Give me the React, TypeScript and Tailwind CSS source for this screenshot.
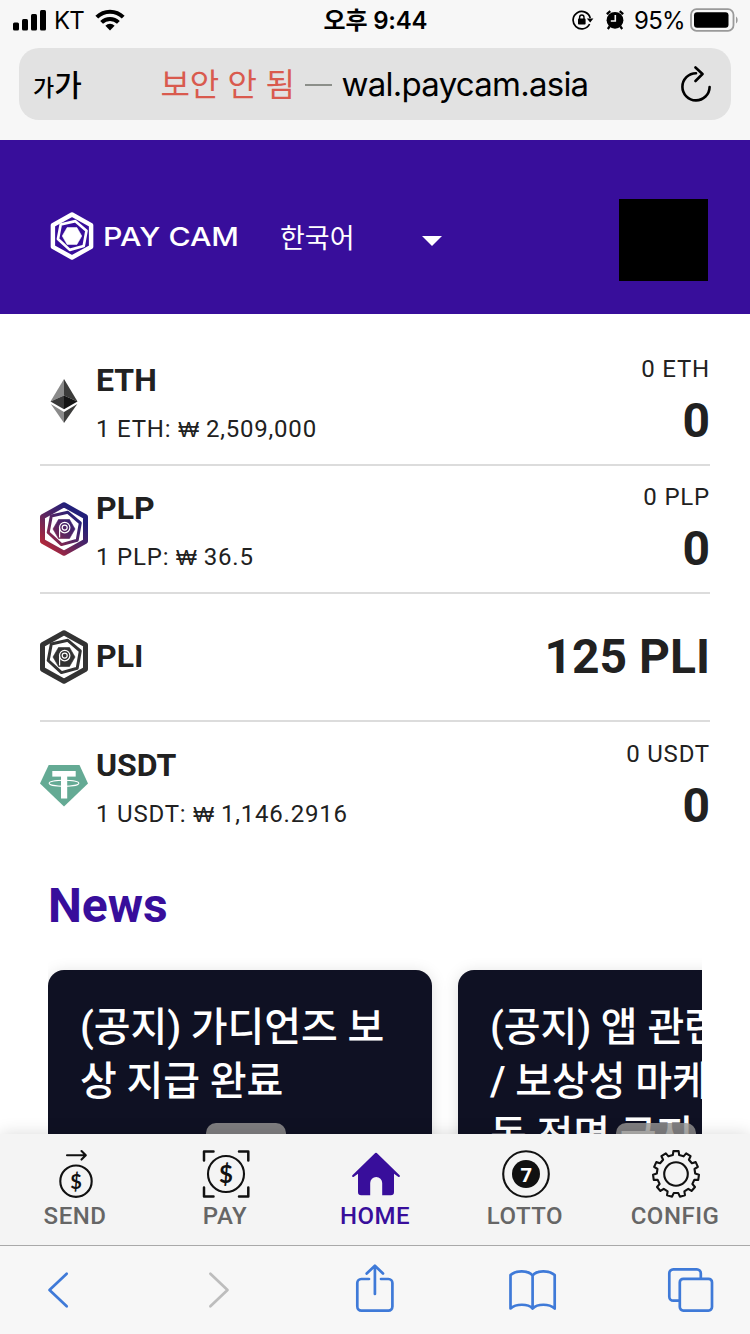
import type { ReactNode } from 'react'

const MIDDLE_HEX = '27.8,10.3 40.3,21 37.2,38.2 21.500,42.600 8.2,30.500 11.3,14'
const INNER_HEX = '18.5,17.5 29.5,17.5 35,27 29.5,36.5 18.5,36.5 13,27'

function HexLogo({ color, hole, className }: { color: string; hole?: string; className: string }) {
  return (
    <svg viewBox="0 0 48 54" className={className} fill="none" stroke={color} strokeLinejoin="round">
      <defs>
        <linearGradient id="plp" gradientUnits="userSpaceOnUse" x1="6" y1="46" x2="38" y2="14">
          <stop offset="0" stopColor="#b3283a" />
          <stop offset="0.5" stopColor="#5c2560" />
          <stop offset="1" stopColor="#22207a" />
        </linearGradient>
      </defs>
      <polygon points="24,2.8 45.5,14.8 45.5,39.2 24,51.2 2.5,39.2 2.5,14.8" strokeWidth="5" />
      <polygon points={MIDDLE_HEX} strokeWidth="3" />
      <polygon points={INNER_HEX} fill={color} strokeWidth="0.6" />
      {hole && (
        <g stroke={hole} strokeWidth="1.2">
          <circle cx="24.7" cy="25.6" r="5.2" />
          <circle cx="24.7" cy="25.6" r="2.5" />
          <line x1="19.6" y1="25.6" x2="19.6" y2="35.5" />
        </g>
      )}
    </svg>
  )
}

function EthLogo() {
  return (
    <svg viewBox="0 0 48 54" className="h-[54px] w-12">
      <polygon points="24,5 10.5,27.5 24,21.5" fill="#8a8a8a" />
      <polygon points="24,5 37.5,27.5 24,21.5" fill="#3c3c3b" />
      <polygon points="10.5,27.5 24,21.5 24,35.3" fill="#393939" />
      <polygon points="37.5,27.5 24,21.5 24,35.3" fill="#141414" />
      <polygon points="10.8,30 24,38 24,49" fill="#8a8a8a" />
      <polygon points="37.3,30 24,38 24,49" fill="#3c3c3b" />
    </svg>
  )
}

function UsdtLogo() {
  return (
    <svg viewBox="0 0 48 54" className="h-[54px] w-12">
      <polygon points="8.7,6 39.5,6 48,24.6 24,47.5 0,24.6" fill="#64aa94" />
      <rect x="12.3" y="12" width="23.4" height="5.6" fill="#fff" />
      <rect x="21" y="12" width="6.2" height="27.5" fill="#fff" />
      <ellipse cx="24" cy="24.2" rx="14.8" ry="3" fill="none" stroke="#fff" strokeWidth="1.1" />
    </svg>
  )
}

const coins = [
  { name: 'ETH', price: '2,509,000', amount: '0 ETH', value: '0', icon: <EthLogo /> },
  { name: 'PLP', price: '36.5', amount: '0 PLP', value: '0', icon: <HexLogo color="url(#plp)" hole="#fff" className="h-[54px] w-12" /> },
  { name: 'PLI', value: '125 PLI', icon: <HexLogo color="#333333" hole="#fff" className="h-[54px] w-12" /> },
  { name: 'USDT', price: '1,146.2916', amount: '0 USDT', value: '0', icon: <UsdtLogo /> },
]

const news = ['(공지) 가디언즈 보상 지급 완료', '(공지) 앱 관련\n/ 보상성 마케팅 활동 전면 금지']

function gearPoints(teeth: number, outer: number, inner: number) {
  const step = (Math.PI * 2) / teeth
  const pts: string[] = []
  for (let i = 0; i < teeth; i++) {
    const corners = [[-0.29, inner], [-0.2, outer], [0.2, outer], [0.29, inner]]
    corners.forEach(([t, r]) => {
      const a = (i + t) * step
      pts.push(`${(25 + r * Math.sin(a)).toFixed(2)},${(24 - r * Math.cos(a)).toFixed(2)}`)
    })
  }
  return pts.join(' ')
}

function NavIcon({ children }: { children: ReactNode }) {
  return (
    <svg viewBox="0 0 48 48" className="h-12 w-12 overflow-visible" fill="none" stroke="#111" strokeWidth="2.1" strokeLinecap="round" strokeLinejoin="round">
      {children}
    </svg>
  )
}

const tabs = [
  {
    label: 'SEND',
    icon: (
      <NavIcon>
        <path d="M16 5.3H34.5M30.5 1l4.3 4.3-4.3 4.3" />
        <circle cx="25" cy="31.2" r="15.7" />
        <text x="25" y="38.5" textAnchor="middle" fill="#111" stroke="none" className="font-['Lato'] text-[20px] font-bold">$</text>
      </NavIcon>
    ),
  },
  {
    label: 'PAY',
    icon: (
      <NavIcon>
        <path d="M3 10.5V1.5H12.5M38 1.5h9.3v9M3 37.5v9h9.5M38 46.5h9.3v-9" strokeWidth="2.5" />
        <circle cx="25" cy="24" r="18" />
        <text x="25" y="32.5" textAnchor="middle" fill="#111" stroke="none" className="font-['Lato'] text-[24px] font-bold">$</text>
      </NavIcon>
    ),
  },
  {
    label: 'HOME',
    active: true,
    icon: (
      <NavIcon>
        <path
          d="M24.2 3a1.2 1.2 0 0 1 1.6 0L48.6 25.2a1 1 0 0 1-1.5 1.5L43 23.7V42a3.2 3.2 0 0 1-3.2 3.2H31.2V33a6 6 0 0 0-12 0V45.2H10.2A3.2 3.2 0 0 1 7 42V23.7l-4.1 3a1 1 0 0 1-1.5-1.5Z"
          fill="#380e9b"
          stroke="none"
        />
      </NavIcon>
    ),
  },
  {
    label: 'LOTTO',
    icon: (
      <NavIcon>
        <circle cx="25" cy="24" r="22.8" />
        <circle cx="25" cy="24" r="14" fill="#111" stroke="none" />
        <text x="25.2" y="31.5" textAnchor="middle" fill="#fff" stroke="none" className="font-['Open_Sans'] text-[20px] font-bold">7</text>
      </NavIcon>
    ),
  },
  {
    label: 'CONFIG',
    icon: (
      <NavIcon>
        <polygon points={gearPoints(11, 23, 19.2)} />
        <circle cx="25" cy="24" r="11.8" />
      </NavIcon>
    ),
  },
]

function ToolIcon({ d, color = '#3f7ad8' }: { d: string; color?: string }) {
  return (
    <svg viewBox="0 0 48 48" className="h-12 w-12 overflow-visible" fill="none" stroke={color} strokeWidth="2.7" strokeLinecap="round" strokeLinejoin="round">
      <path d={d} />
    </svg>
  )
}

function StatusBar() {
  return (
    <div className="grid h-10 grid-cols-3 items-center pl-[13px] pr-3 font-['Inter','Noto_Sans_CJK_KR',sans-serif] text-2xl text-black">
      <div className="flex items-center">
        <svg viewBox="0 0 33 22" className="h-[22px] w-[33px]">
          <rect x="0" y="13.5" width="6" height="8" rx="1.5" />
          <rect x="9" y="10" width="6" height="11.5" rx="1.5" />
          <rect x="18" y="5" width="6" height="16.5" rx="1.5" />
          <rect x="27" y="1" width="6" height="20.5" rx="1.5" />
        </svg>
        <span className="ml-2 pt-0.5 tracking-[-0.8px]">KT</span>
        <svg viewBox="0 0 30 22" className="ml-[11px] h-[22px] w-[30px]" fill="none" stroke="#000" strokeWidth="4">
          <path d="M1.8 8.2a18.7 18.7 0 0 1 26.4 0" />
          <path d="M6.6 13.4a12 12 0 0 1 16.8 0" />
          <path d="M15 21.5l-4.6-4.8a6.6 6.6 0 0 1 9.2 0Z" fill="#000" stroke="none" />
        </svg>
      </div>
      <div className="whitespace-nowrap pt-0.5 text-center font-semibold tracking-[-0.2px]">오후 9:44</div>
      <div className="flex items-center justify-end">
        <svg viewBox="0 0 22 20" className="h-5 w-[22px]" fill="none" stroke="#000" strokeWidth="1.7">
          <path d="M17.6 14a8.7 8.7 0 1 1 0.6-6" />
          <path d="M14.8 8.4h6.6L18.2 12.6Z" fill="#000" stroke="none" />
          <rect x="6" y="8.6" width="7.6" height="6" rx="0.8" fill="#000" stroke="none" />
          <path d="M7.6 9V7.2a2.2 2.2 0 0 1 4.4 0V9" strokeWidth="1.4" />
        </svg>
        <svg viewBox="0 0 18 20" className="ml-3 h-5 w-[18px]">
          <circle cx="9" cy="10.3" r="8.4" />
          <path d="M0.8 4.2L4.3 1.2M17.2 4.2L13.7 1.2M3.6 16.5L1.8 19M14.4 16.5l1.8 2.5" stroke="#000" strokeWidth="2.2" />
          <path d="M9.3 5v6H4.8" fill="none" stroke="#f7f7f7" strokeWidth="1.6" />
        </svg>
        <span className="ml-2.5 pt-0.5 tracking-[-0.7px]">95%</span>
        <svg viewBox="0 0 48 24" className="ml-[5px] h-6 w-12">
          <rect x="1" y="1.2" width="42.5" height="21.6" rx="5.5" fill="none" stroke="#9a9a9a" strokeWidth="1.8" />
          <rect x="4" y="4.3" width="34.5" height="15.4" rx="3" />
          <path d="M46 8.5c2.2 1.6 2.2 5.4 0 7Z" fill="#9a9a9a" />
        </svg>
      </div>
    </div>
  )
}

function AddressBar() {
  return (
    <div className="mx-[19px] mt-2 flex h-[72px] items-center justify-between rounded-[20px] bg-[#e2e2e2] pl-3.5 pr-[19px] font-['Inter','Noto_Sans_CJK_KR',sans-serif] text-black">
      <div className="flex w-[68px] items-baseline pt-0.5 font-medium">
        <span className="text-[23px]">가</span>
        <span className="text-[30px]">가</span>
      </div>
      <div className="flex items-center whitespace-nowrap pt-0.5 text-[33px]">
        <span className="text-[32px] tracking-[-0.3px] text-[#d95a4e]">보안 안 됨</span>
        <span className="mx-2.5 h-[2.5px] w-[27px] bg-[#8c8f8a]" />
        <span className="tracking-[-0.75px]">wal.paycam.asia</span>
      </div>
      <div className="flex w-16 justify-end">
        <svg viewBox="0 0 32 36" className="h-9 w-8" fill="none" stroke="#000" strokeWidth="2.6" strokeLinecap="round" strokeLinejoin="round">
          <path d="M16 7.2A13.6 13.6 0 1 0 29.6 21" />
          <path d="M15.5 1.5L22.5 8L15.5 15" />
        </svg>
      </div>
    </div>
  )
}

export default function App() {
  return (
    <div className="flex h-[1334px] w-[750px] flex-col overflow-hidden bg-white font-['Roboto','Noto_Sans_CJK_KR',sans-serif] text-[#212121]">
      {/* Browser chrome */}
      <div className="h-[140px] shrink-0 bg-[#f7f7f7]">
        <StatusBar />
        <AddressBar />
      </div>

      {/* Header */}
      <header className="flex h-[174px] shrink-0 items-center bg-[#380e9b] pl-[50px] pr-[42px] pt-[26px] text-white">
        <HexLogo color="#fff" className="-mt-2 h-12 w-11" />
        <svg viewBox="0 0 134 24" className="-mt-2 ml-2.5 h-6 w-[134px] overflow-visible">
          <text x="-1" y="21.5" textLength="136" lengthAdjust="spacingAndGlyphs" fill="#fff" className="font-['Inter',sans-serif] text-[26px] font-medium">PAY CAM</text>
        </svg>
        <button className="-mt-0.5 ml-[42px] flex w-[162px] items-center justify-between">
          <span className="text-[27px]">한국어</span>
          <svg viewBox="0 0 20 10" className="mt-1 h-2.5 w-5" fill="#fff">
            <polygon points="0,0 20,0 10,10" />
          </svg>
        </button>
        <div className="ml-auto h-[82px] w-[89px] bg-black" />
      </header>

      {/* Content */}
      <main className="min-h-0 flex-1 overflow-hidden pt-6">
        <ul className="mx-10">
          {coins.map((c) => (
            <li key={c.name} className="flex h-32 items-center border-b-2 border-[#dcdcdc] last:h-[129px] last:border-transparent">
              {c.icon}
              <div className={c.price ? 'ml-2 pt-2' : 'ml-2 pb-0.5'}>
                <div className="text-[32px] leading-[49px] font-bold">{c.name}</div>
                {c.price && (
                  <div className="flex text-2xl leading-[49px] tracking-[0.8px] whitespace-pre">
                    {`1 ${c.name}: `}
                    <span className="w-[21px] font-['Liberation_Sans',sans-serif] text-[22px] tracking-[0px]">₩</span>
                    {` ${c.price}`}
                  </div>
                )}
              </div>
              <div className={c.amount ? 'ml-auto pt-2 text-right' : 'ml-auto text-right'}>
                {c.amount && <div className="text-2xl leading-8 tracking-[0.8px]">{c.amount}</div>}
                <div className="text-5xl leading-[72px] font-bold">{c.value}</div>
              </div>
            </li>
          ))}
        </ul>

        <h2 className="mx-12 mt-[19px] text-5xl leading-[72px] font-bold text-[#380e9b]">News</h2>
        <div className="mx-12 mt-[11px] flex gap-[26px] overflow-hidden pt-[17px]">
          {news.map((n) => (
            <article key={n} className="relative h-[300px] w-96 shrink-0 rounded-2xl bg-[#0f1123] px-8 pt-[31px] text-[40px] leading-[54px] font-medium tracking-[-0.1px] break-all whitespace-pre-line text-white shadow-[0_2px_16px_rgba(0,0,0,0.13)]">
              {n}
              <span className="absolute left-[158px] top-[153px] h-10 w-20 rounded-[10px] bg-[#9a9896]/80" />
            </article>
          ))}
        </div>
      </main>

      {/* App tabs */}
      <nav className="z-10 grid h-[111px] shrink-0 grid-cols-5 bg-[#f4f4f4] pt-4 shadow-[0_0_16px_rgba(0,0,0,0.15)]">
        {tabs.map((t) => (
          <div key={t.label} className="flex flex-col items-center">
            {t.icon}
            <span className={`text-2xl leading-9 font-medium tracking-[0.5px] ${t.active ? 'text-[#380e9b]' : 'text-[#666]'}`}>{t.label}</span>
          </div>
        ))}
      </nav>

      {/* Browser toolbar */}
      <div className="z-10 flex h-[89px] shrink-0 justify-between border-t border-[#a9a9a9] bg-[#f7f7f7] pl-[34px] pr-9 pt-[18px]">
        <ToolIcon d="M32.7 9.7L15.5 26L32.7 42.3" />
        <ToolIcon d="M18.4 9.7L35.5 26L18.4 42.3" color="#bdbdbd" />
        <ToolIcon d="M19 15H11.3a4 4 0 0 0-4 4V42.6a4 4 0 0 0 4 4H38.4a4 4 0 0 0 4-4V19a4 4 0 0 0-4-4H31M24.9 30V2M16.7 9.5L24.9 1.7L33 9.5" />
        <ToolIcon d="M24.6 43.5V11.5C20 6 8 6 2.5 11V44.5C8 39.5 20 39.5 24.6 44.5C29.5 39.5 41 39.5 46.7 44.5V11C41 6 29 6 24.6 11.5" />
        <ToolIcon d="M13 36.7H7.3a4 4 0 0 1-4-4V9.3a4 4 0 0 1 4-4H30.8a4 4 0 0 1 4 4V14M17.3 14.8H42.5a3.5 3.5 0 0 1 3.5 3.5V43.1a3.5 3.5 0 0 1-3.5 3.5H17.3a3.5 3.5 0 0 1-3.5-3.5V18.3a3.5 3.5 0 0 1 3.5-3.5Z" />
      </div>
    </div>
  )
}
